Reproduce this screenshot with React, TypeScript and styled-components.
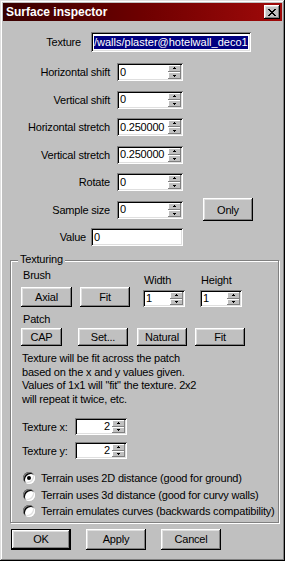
import React from 'react';
import styled, { createGlobalStyle, css } from 'styled-components';

const raised = css`
    box-shadow: inset -1px -1px #000, inset 1px 1px #fff, inset -2px -2px #808080, inset 2px 2px #dfdfdf;
`;

const sunken = css`
    box-shadow: inset 1px 1px #808080, inset -1px -1px #fff, inset 2px 2px #000, inset -2px -2px #dfdfdf;
`;

const GlobalStyle = createGlobalStyle`
    html, body {
        margin: 0;
        padding: 0;
        background: #c0c0c0;
    }
    body {
        font-family: "Liberation Sans", Arial, sans-serif;
        font-size: 11px;
    }
`;

const ArrowUp = () => (
    <svg width="5" height="3" viewBox="0 0 5 3" shapeRendering="crispEdges">
        <rect x="2" y="0" width="1" height="1" fill="#000" />
        <rect x="1" y="1" width="3" height="1" fill="#000" />
    </svg>
);

const ArrowDown = () => (
    <svg width="5" height="3" viewBox="0 0 5 3" shapeRendering="crispEdges">
        <rect x="1" y="1" width="3" height="1" fill="#000" />
        <rect x="2" y="2" width="1" height="1" fill="#000" />
    </svg>
);

const CloseGlyph = () => (
    <svg width="8" height="7" viewBox="0 0 8 7" shapeRendering="crispEdges">
        <path d="M0 0h2v1h-2zM6 0h2v1h-2zM1 1h2v1h-2zM5 1h2v1h-2zM2 2h4v1h-4zM3 3h2v1h-2zM2 4h4v1h-4zM1 5h2v1h-2zM5 5h2v1h-2zM0 6h2v1h-2zM6 6h2v1h-2z" fill="#000" />
    </svg>
);

const Spin = () => (
    <SpinButtons>
        <SpinHalf>
            <ArrowUp />
        </SpinHalf>
        <SpinHalf>
            <ArrowDown />
        </SpinHalf>
    </SpinButtons>
);

const spinRows = [
    { label: 'Horizontal shift', value: '0' },
    { label: 'Vertical shift', value: '0' },
    { label: 'Horizontal stretch', value: '0.250000' },
    { label: 'Vertical stretch', value: '0.250000' },
    { label: 'Rotate', value: '0' },
];

const radios = [
    'Terrain uses 2D distance (good for ground)',
    'Terrain uses 3d distance (good for curvy walls)',
    'Terrain emulates curves (backwards compatibility)',
];

const App = () => {
    return (
        <>
            <GlobalStyle />
            <Window>
                <TitleBar>
                    <span>Surface inspector</span>
                    <CloseButton>
                        <CloseGlyph />
                    </CloseButton>
                </TitleBar>

                <TopForm>
                    <Row $h={20}>
                        <Label $w={78} $mr={10}>Texture</Label>
                        <Field $w={160} $h={20}>
                            <Selected>/walls/plaster@hotelwall_deco1</Selected>
                        </Field>
                    </Row>
                    <SpinRows>
                        {spinRows.map(r => (
                            <Row key={r.label} $h={18}>
                                <Label $w={107} $mr={7}>{r.label}</Label>
                                <Field $w={66} $h={18}>
                                    <FieldText>{r.value}</FieldText>
                                    <Spin />
                                </Field>
                            </Row>
                        ))}
                        <Row $h={18}>
                            <Label $w={107} $mr={7}>Sample size</Label>
                            <Field $w={66} $h={18}>
                                <FieldText>0</FieldText>
                                <Spin />
                            </Field>
                            <Button $w={50} $h={23} $ml={20}>Only</Button>
                        </Row>
                        <Row $h={18}>
                            <Label $w={83} $mr={5}>Value</Label>
                            <Field $w={92} $h={18}>
                                <FieldText>0</FieldText>
                            </Field>
                        </Row>
                    </SpinRows>
                </TopForm>

                <Group>
                    <Legend>Texturing</Legend>
                    <BrushSection>
                        <Column>
                            <SubLabel>Brush</SubLabel>
                            <ButtonRow>
                                <Button $w={51} $h={20}>Axial</Button>
                                <Button $w={50} $h={20} $ml={8}>Fit</Button>
                            </ButtonRow>
                        </Column>
                        <Column $ml={13}>
                            <SubLabel>Width</SubLabel>
                            <Field $w={42} $h={17}>
                                <FieldText>1</FieldText>
                                <Spin />
                            </Field>
                        </Column>
                        <Column $ml={15}>
                            <SubLabel>Height</SubLabel>
                            <Field $w={42} $h={17}>
                                <FieldText>1</FieldText>
                                <Spin />
                            </Field>
                        </Column>
                    </BrushSection>

                    <PatchLabel>Patch</PatchLabel>
                    <ButtonRow>
                        <Button $w={41} $h={18}>CAP</Button>
                        <Button $w={50} $h={18} $ml={16}>Set...</Button>
                        <Button $w={50} $h={18} $ml={9}>Natural</Button>
                        <Button $w={50} $h={18} $ml={8}>Fit</Button>
                    </ButtonRow>

                    <Paragraph>
                        Texture will be fit across the patch
                        <br />
                        based on the x and y values given.
                        <br />
                        Values of 1x1 will "fit" the texture. 2x2
                        <br />
                        will repeat it twice, etc.
                    </Paragraph>

                    <Row $h={17} $mt={12}>
                        <Label $w={53} $align="left">Texture x:</Label>
                        <Field $w={52} $h={17} $right>
                            <FieldText>2</FieldText>
                            <Spin />
                        </Field>
                    </Row>
                    <Row $h={17} $mt={7}>
                        <Label $w={53} $align="left">Texture y:</Label>
                        <Field $w={52} $h={17} $right>
                            <FieldText>2</FieldText>
                            <Spin />
                        </Field>
                    </Row>

                    <RadioList>
                        {radios.map((r, i) => (
                            <RadioRow key={r}>
                                <RadioDot $checked={i === 0} />
                                {r}
                            </RadioRow>
                        ))}
                    </RadioList>
                </Group>

                <Footer>
                    <Button $w={60} $h={21} $isDefault>OK</Button>
                    <Button $w={60} $h={21}>Apply</Button>
                    <Button $w={60} $h={21}>Cancel</Button>
                </Footer>
            </Window>
        </>
    );
};

export default App;

const Window = styled.div`
    width: 285px;
    height: 561px;
    box-sizing: border-box;
    padding: 3px;
    background: #c0c0c0;
    color: #000;
    letter-spacing: -0.2px;
    display: flex;
    flex-direction: column;
    box-shadow: inset -1px -1px #000, inset 1px 1px #dfdfdf, inset -2px -2px #808080, inset 2px 2px #fff;
`;

const TitleBar = styled.div`
    height: 18px;
    flex-shrink: 0;
    display: flex;
    align-items: center;
    justify-content: space-between;
    padding: 0 2px 0 3px;
    background: linear-gradient(90deg, #380000 0%, #6e0000 50%, #a00a0a 100%);
    color: #fff;
    font-size: 12px;
    font-weight: bold;
    letter-spacing: 0;
`;

const CloseButton = styled.div`
    width: 16px;
    height: 14px;
    box-sizing: border-box;
    background: #c0c0c0;
    display: flex;
    align-items: center;
    justify-content: center;
    padding-right: 1px;
    ${raised};
`;

const TopForm = styled.div`
    padding-top: 11px;
    display: flex;
    flex-direction: column;
`;

const SpinRows = styled.div`
    margin-top: 11px;
    display: flex;
    flex-direction: column;
    gap: 9.5px;
`;

interface RowProps {
    $h: number;
    $mt?: number;
}

const Row = styled.div<RowProps>`
    display: flex;
    align-items: center;
    height: ${props => props.$h}px;
    margin-top: ${props => props.$mt || 0}px;
`;

interface LabelProps {
    $w: number;
    $mr?: number;
    $align?: string;
}

const Label = styled.div<LabelProps>`
    width: ${props => props.$w}px;
    margin-right: ${props => props.$mr || 0}px;
    text-align: ${props => props.$align || 'right'};
    white-space: nowrap;
    flex-shrink: 0;
`;

interface FieldProps {
    $w: number;
    $h: number;
    $right?: boolean;
}

const Field = styled.div<FieldProps>`
    width: ${props => props.$w}px;
    height: ${props => props.$h}px;
    box-sizing: border-box;
    flex-shrink: 0;
    background: #fff;
    display: flex;
    align-items: center;
    justify-content: ${props => (props.$right ? 'flex-end' : 'space-between')};
    padding: 2px 2px 2px 3px;
    overflow: hidden;
    ${sunken};
`;

const FieldText = styled.span`
    white-space: nowrap;
    line-height: 13px;
`;

const Selected = styled.span`
    background: #000080;
    color: #fff;
    white-space: nowrap;
    line-height: 13px;
    letter-spacing: 0;
`;

const SpinButtons = styled.div`
    width: 13px;
    align-self: stretch;
    display: flex;
    flex-direction: column;
    margin-left: 2px;
    flex-shrink: 0;
`;

const SpinHalf = styled.div`
    flex: 1;
    background: #c0c0c0;
    display: flex;
    align-items: center;
    justify-content: center;
    box-shadow: inset -1px -1px #808080, inset 1px 1px #fff;
`;

interface ButtonProps {
    $w: number;
    $h: number;
    $ml?: number;
    $isDefault?: boolean;
}

const Button = styled.button<ButtonProps>`
    width: ${props => props.$w}px;
    height: ${props => props.$h}px;
    margin-left: ${props => props.$ml || 0}px;
    flex-shrink: 0;
    padding: 0;
    border: none;
    background: #c0c0c0;
    font-family: inherit;
    font-size: 11px;
    letter-spacing: -0.2px;
    color: #000;
    ${props =>
        props.$isDefault
            ? css`
                  box-shadow: inset 0 0 0 1px #000, inset -2px -2px #000, inset 2px 2px #fff,
                      inset -3px -3px #808080, inset 3px 3px #dfdfdf;
              `
            : raised};
`;

const Group = styled.div`
    position: relative;
    margin: 14px 0 0 7px;
    width: 269px;
    box-sizing: border-box;
    border: 1px solid #808080;
    box-shadow: inset 1px 1px #fff, 1px 1px #fff;
    padding: 0 8px 2px 11px;
`;

const Legend = styled.div`
    position: absolute;
    top: -8px;
    left: 7px;
    padding: 0 2px;
    background: #c0c0c0;
    line-height: 13px;
`;

const BrushSection = styled.div`
    display: flex;
    align-items: flex-end;
    margin-top: 8px;
`;

interface ColumnProps {
    $ml?: number;
}

const Column = styled.div<ColumnProps>`
    display: flex;
    flex-direction: column;
    gap: 3px;
    margin-left: ${props => props.$ml || 0}px;
`;

const SubLabel = styled.div`
    line-height: 13px;
    padding-left: 1px;
`;

const PatchLabel = styled(SubLabel)`
    margin-top: 6px;
`;

const ButtonRow = styled.div`
    display: flex;
    margin-left: -1px;
    margin-top: 2px;
`;

const Paragraph = styled.div`
    margin-top: 6px;
    line-height: 13.5px;
    white-space: nowrap;
`;

const RadioList = styled.div`
    margin-top: 11px;
    display: flex;
    flex-direction: column;
`;

const RadioRow = styled.div`
    display: flex;
    align-items: center;
    height: 16.5px;
    white-space: nowrap;
`;

interface RadioDotProps {
    $checked: boolean;
}

const RadioDot = styled.span<RadioDotProps>`
    width: 12px;
    height: 12px;
    flex-shrink: 0;
    margin: 0 6px 0 1px;
    border-radius: 50%;
    background: #fff;
    position: relative;
    ${sunken};

    &::after {
        content: '';
        display: ${props => (props.$checked ? 'block' : 'none')};
        position: absolute;
        left: 4px;
        top: 4px;
        width: 4px;
        height: 4px;
        border-radius: 50%;
        background: #000;
    }
`;

const Footer = styled.div`
    display: flex;
    gap: 15px;
    margin: 6px 0 0 8px;
`;
